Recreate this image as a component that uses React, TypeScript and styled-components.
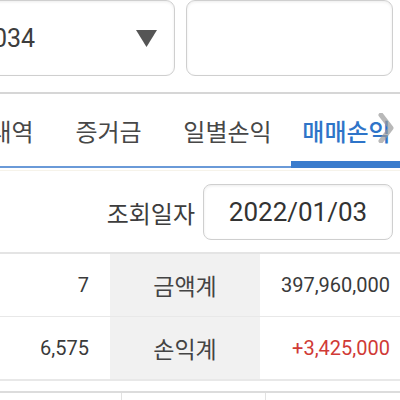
import styled, {createGlobalStyle} from "styled-components";

const GlobalStyle = createGlobalStyle`
  html, body {
    margin: 0;
    padding: 0;
    background: #fff;
    overflow: hidden;
  }
  body {
    font-family: Roboto, "Noto Sans CJK KR", sans-serif;
    color: #3a3a3a;
  }
`;

const Page = styled.div`
  width: 400px;
  height: 400px;
  overflow: hidden;
`;

const TopRow = styled.div`
  display: flex;
  gap: 11px;
  height: 76px;
  padding-right: 7px;
  border-bottom: 2px solid #d6d6d6;
  padding-bottom: 16px;
`;

const Box = styled.div`
  box-sizing: border-box;
  height: 76px;
  border: 1px solid #cfcfcf;
  border-radius: 9px;
  box-shadow: inset 0 1px 3px rgba(0, 0, 0, 0.08);
  background: #fff;
  display: flex;
  align-items: center;
`;

const SelectBox = styled(Box)`
  width: 195px;
  margin-left: -20px;
  padding: 0 17px 0 16px;
  justify-content: space-between;
  font-size: 25px;
  color: #3d3d3d;
  span {
    margin-left: -4px;
  }
`;

const EmptyBox = styled(Box)`
  flex: 1;
`;

const TabBar = styled.div`
  position: relative;
  display: flex;
  height: 72px;
  margin-left: -70px;
  border-bottom: 2px solid #6a9ad8;
`;

const Tab = styled.div<{$active?: boolean}>`
  position: relative;
  flex: 0 0 119px;
  display: flex;
  align-items: center;
  justify-content: center;
  padding-top: 1px;
  font-family: "Noto Sans CJK KR", sans-serif;
  font-size: 24px;
  color: ${({$active}) => ($active ? "#2e74c8" : "#474747")};
  font-weight: ${({$active}) => ($active ? 500 : 400)};
  &::after {
    content: "";
    display: ${({$active}) => ($active ? "block" : "none")};
    position: absolute;
    left: 4px;
    right: 0;
    bottom: -2px;
    height: 7px;
    background: #3a7ccd;
  }
`;

const ScrollHint = styled.svg`
  position: absolute;
  right: 6px;
  top: 19px;
`;

const DateRow = styled.div`
  display: flex;
  justify-content: flex-end;
  align-items: center;
  gap: 8px;
  padding: 13px 7px 0 0;
  border-top: 1px solid #f6f3ea;
  margin-top: 2px;
`;

const DateLabel = styled.span`
  font-family: "Noto Sans CJK KR", sans-serif;
  font-size: 24px;
  color: #3d3d3d;
`;

const DateBox = styled(Box)`
  width: 190px;
  height: 56px;
  border-radius: 8px;
  justify-content: center;
  font-size: 26px;
  color: #333;
`;

const Table = styled.div`
  margin-top: 12px;
  border-top: 2px solid #e4e4e4;
  border-bottom: 2px solid #e8e8e8;
`;

const Row = styled.div`
  display: grid;
  grid-template-columns: 110px 150px 1fr;
  height: 62px;
  & + & {
    border-top: 1px solid #e8e8e8;
  }
`;

const Cell = styled.div<{$red?: boolean}>`
  display: flex;
  align-items: center;
  justify-content: flex-end;
  padding-right: 10px;
  font-size: 20px;
  color: ${({$red}) => ($red ? "#d03a36" : "#3a3a3a")};
`;

const NumCell = styled(Cell)`
  padding-right: 21px;
`;

const HeadCell = styled.div`
  display: flex;
  align-items: center;
  justify-content: center;
  background: #f1f1f1;
  font-family: "Noto Sans CJK KR", sans-serif;
  font-size: 23px;
  color: #444;
`;

const NextTable = styled.div`
  margin-top: 10px;
  display: grid;
  grid-template-columns: 121px 144px 1fr;
  height: 20px;
  border-top: 2px solid #dcdcdc;
`;

const NextCell = styled.div`
  border-left: 1px solid #e2e2e2;
  &:first-child {
    border-left: none;
  }
`;

export default function App() {
  const tabs = ["주문내역", "증거금", "일별손익", "매매손익"];
  return (
    <Page>
      <GlobalStyle />
      <TopRow>
        <SelectBox>
          <span>034</span>
          <svg width="21" height="17" viewBox="0 0 21 17">
            <path d="M0 0 H21 L10.5 17 Z" fill="#555" />
          </svg>
        </SelectBox>
        <EmptyBox />
      </TopRow>
      <TabBar>
        {tabs.map((t, i) => (
          <Tab key={t} $active={i === tabs.length - 1}>
            {t}
          </Tab>
        ))}
        <ScrollHint width="16" height="30" viewBox="0 0 16 30">
          <path d="M3 2 L13 15 L3 28" stroke="#9a9a9a" strokeOpacity="0.7" strokeWidth="5" fill="none" strokeLinecap="round" strokeLinejoin="round" />
        </ScrollHint>
      </TabBar>
      <DateRow>
        <DateLabel>조회일자</DateLabel>
        <DateBox>2022/01/03</DateBox>
      </DateRow>
      <Table>
        <Row>
          <NumCell>7</NumCell>
          <HeadCell>금액계</HeadCell>
          <Cell>397,960,000</Cell>
        </Row>
        <Row>
          <NumCell>6,575</NumCell>
          <HeadCell>손익계</HeadCell>
          <Cell $red>+3,425,000</Cell>
        </Row>
      </Table>
      <NextTable>
        <NextCell />
        <NextCell />
        <NextCell />
      </NextTable>
    </Page>
  );
}
